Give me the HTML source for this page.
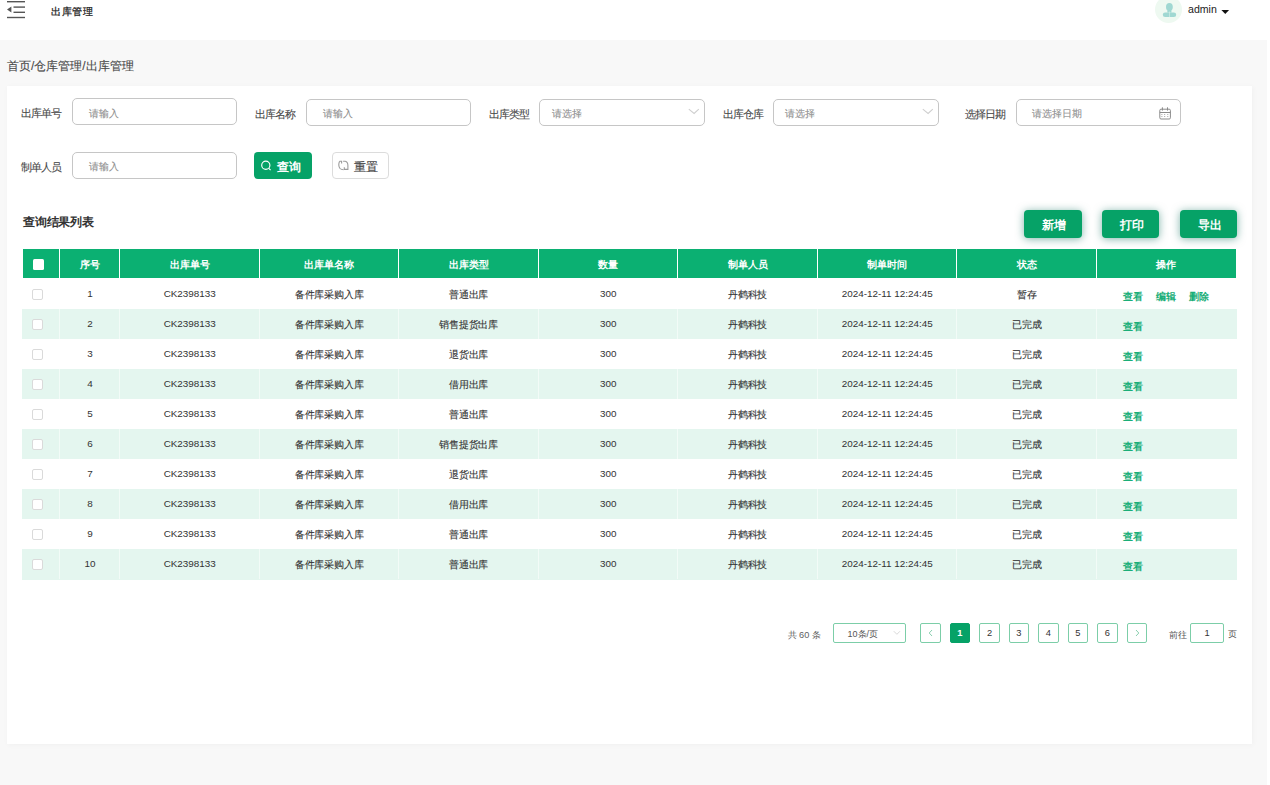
<!DOCTYPE html>
<html><head><meta charset="utf-8">
<style>
*{box-sizing:border-box;margin:0;padding:0}
html,body{width:1270px;height:785px;overflow:hidden}
body{position:relative;background:#f8f8f8;font-family:"Liberation Sans",sans-serif;color:#333}
.abs{position:absolute}
.hdr{left:0;top:0;width:1270px;height:40px;background:#fff}
.rstrip{left:1267px;top:40px;width:3px;height:745px;background:#fff}
.crumb{left:7px;top:56px;font-size:12px;line-height:20px;color:#4a4a4a;-webkit-text-stroke:0.12px #4a4a4a;white-space:nowrap}
.card{left:7px;top:86px;width:1245px;height:658px;background:#fff;box-shadow:1px 1px 6px rgba(0,0,0,0.035)}
.lbl{font-size:11px;letter-spacing:-1px;line-height:14px;color:#484848;-webkit-text-stroke:0.1px #484848;white-space:nowrap}
.inp{height:27px;border:1px solid #c6c6c6;border-radius:5px;background:#fff}
.ph{font-size:10px;line-height:13px;color:#8f8f8f;-webkit-text-stroke:0.1px #8f8f8f;white-space:nowrap}
.btn-g{background:#06a267;border-radius:4px;color:#fff}
.hd{left:23px;top:249px;width:1213px;height:29px;background:#0bb072}
.cell{position:absolute;text-align:center;white-space:nowrap}
.th{color:#fff;font-size:10px;font-weight:bold;line-height:31px}
.row{position:absolute;left:22px;width:1215px;height:30px}
.row.m{background:#e4f6ef}
.td{font-size:9.9px;line-height:31px;color:#333}
.td.zh{font-size:10px;letter-spacing:-0.2px;text-indent:-0.2px;line-height:34px;-webkit-text-stroke:0.12px #333}
.cb{position:absolute;width:11px;height:11px;border:1px solid #dadada;border-radius:2px;background:#fff}
.vline{position:absolute;width:1px;background:#fff}
.vline.m{background:#f2fbf7}
.op{position:absolute;font-size:9.8px;font-weight:bold;color:#1aae78;white-space:nowrap;line-height:14px}
.pg{position:absolute;top:623px;width:20.5px;height:20px;border:1px solid #7ccea8;border-radius:2px;background:#fff;font-size:9.3px;line-height:18.5px;text-align:center;color:#333}
</style></head><body>
<div class="abs hdr"></div>
<div class="abs rstrip"></div>
<!-- menu icon -->
<svg class="abs" style="left:0;top:0" width="40" height="40" viewBox="0 0 40 40">
<g fill="#555">
<rect x="7" y="1" width="18" height="1.4"/>
<rect x="13.5" y="6.4" width="11.5" height="1.4"/>
<rect x="13.5" y="11.6" width="11.5" height="1.4"/>
<rect x="7" y="16.8" width="18" height="1.4"/>
<path d="M7 9.5 L11.4 6.4 L11.4 12.6 Z"/>
</g></svg>
<div class="abs" style="left:51px;top:5px;font-size:10.3px;letter-spacing:0.6px;line-height:14px;color:#222;-webkit-text-stroke:0.25px #222">出库管理</div>
<!-- avatar -->
<div class="abs" style="left:1155px;top:-4px;width:27px;height:27px;border-radius:50%;background:#eef9f1"></div>
<svg class="abs" style="left:1155px;top:-4px" width="27" height="27" viewBox="0 0 27 27">
<g fill="#a0d8d2">
<ellipse cx="14.4" cy="10.9" rx="3.4" ry="3.9"/>
<path d="M12.6 14 L16.2 14 L16.6 16.6 L12.2 16.6 Z"/>
<rect x="7.8" y="16.5" width="13.4" height="4.6" rx="2.3"/>
</g>
<path d="M14.5 15.5 V21.1" stroke="#d6f0ea" stroke-width="0.6"/>
</svg>
<div class="abs" style="left:1188px;top:2px;font-size:10.6px;line-height:14px;color:#222">admin</div>
<svg class="abs" style="left:1221px;top:9px" width="9" height="6" viewBox="0 0 9 6"><path d="M0.4 1 L8.1 1 L4.25 4.9 Z" fill="#111"/></svg>

<div class="abs crumb">首页/仓库管理/出库管理</div>
<div class="abs card"></div>

<!-- form row 1 -->
<div class="abs lbl" style="left:21px;top:106px">出库单号</div>
<div class="abs inp" style="left:72px;top:98px;width:165px"></div>
<div class="abs ph" style="left:89px;top:107px">请输入</div>

<div class="abs lbl" style="left:255px;top:107px">出库名称</div>
<div class="abs inp" style="left:306px;top:99px;width:165px"></div>
<div class="abs ph" style="left:323px;top:107px">请输入</div>

<div class="abs lbl" style="left:489px;top:107px">出库类型</div>
<div class="abs inp" style="left:539px;top:99px;width:166px"></div>
<div class="abs ph" style="left:552px;top:107px">请选择</div>
<svg class="abs" style="left:684px;top:102px" width="20" height="20" viewBox="0 0 20 20"><path d="M4.8 7.1 L10.1 11.5 L14.8 7.1" fill="none" stroke="#cfcfcf" stroke-width="1.1"/></svg>

<div class="abs lbl" style="left:723px;top:107px">出库仓库</div>
<div class="abs inp" style="left:773px;top:99px;width:166px"></div>
<div class="abs ph" style="left:785px;top:107px">请选择</div>
<svg class="abs" style="left:918px;top:102px" width="20" height="20" viewBox="0 0 20 20"><path d="M4.8 7.1 L10.1 11.5 L14.8 7.1" fill="none" stroke="#cfcfcf" stroke-width="1.1"/></svg>

<div class="abs lbl" style="left:965px;top:107px">选择日期</div>
<div class="abs inp" style="left:1016px;top:99px;width:165px"></div>
<div class="abs ph" style="left:1032px;top:107px">请选择日期</div>
<svg class="abs" style="left:1154px;top:103px" width="22" height="22" viewBox="0 0 22 22"><g fill="none" stroke="#8a8a8a" stroke-width="1"><rect x="5.8" y="6.2" width="10.6" height="9.8" rx="1.2"/><path d="M5.8 9.5 H16.4 M8.4 4.3 V7.6 M13.5 4.3 V7.6"/></g><g fill="#9a9a9a"><rect x="7.3" y="11.1" width="1.1" height="0.8"/><rect x="10.1" y="11.1" width="1.1" height="0.8"/><rect x="13.2" y="11.1" width="1.1" height="0.8"/><rect x="7.3" y="13.2" width="1.1" height="0.8"/><rect x="10.1" y="13.2" width="1.1" height="0.8"/><rect x="13.2" y="13.2" width="1.1" height="0.8"/></g></svg>

<!-- form row 2 -->
<div class="abs lbl" style="left:21px;top:159.5px">制单人员</div>
<div class="abs inp" style="left:72px;top:151.5px;width:165px"></div>
<div class="abs ph" style="left:88.5px;top:159.5px">请输入</div>

<div class="abs btn-g" style="left:254px;top:151.5px;width:58px;height:27.5px"></div>
<svg class="abs" style="left:256px;top:155px" width="20" height="20" viewBox="0 0 20 20"><circle cx="9.8" cy="10.2" r="4.1" fill="none" stroke="#fff" stroke-width="1.15"/><path d="M12.8 13.3 L14.6 15.2" stroke="#fff" stroke-width="1.1"/></svg>
<div class="abs" style="left:276.5px;top:159px;font-size:12px;line-height:16px;font-weight:bold;color:#fff">查询</div>

<div class="abs" style="left:332px;top:152px;width:57px;height:27px;border:1px solid #dcdcdc;border-radius:4px;background:#fff"></div>
<svg class="abs" style="left:334px;top:156px" width="20" height="20" viewBox="0 0 20 20"><g fill="none" stroke="#9c9c9c" stroke-width="1.1"><path d="M7.6 7.6 V5.3 H5.5"/><path d="M5.6 5.3 C4.6 7.5 4.6 10.5 6 12.5 C7 13.6 8.5 13.8 9.6 13.8"/><path d="M9.1 5.2 H11.2 C13.2 5.6 13.9 7.3 13.9 9.5 V13.4 H10.3 V11.3"/></g></svg>
<div class="abs" style="left:354px;top:159px;font-size:11.6px;line-height:16px;color:#4a4a4a;-webkit-text-stroke:0.2px #4a4a4a">重置</div>

<!-- title & action buttons -->
<div class="abs" style="left:23px;top:214px;font-size:12px;letter-spacing:-0.25px;line-height:16px;font-weight:bold;color:#333">查询结果列表</div>
<div class="abs btn-g" style="left:1024px;top:210px;width:58px;height:27.5px;box-shadow:0 1px 8px rgba(0,105,85,0.5)"></div>
<div class="abs" style="left:1042px;top:216.5px;font-size:11.6px;line-height:16px;font-weight:bold;color:#fff">新增</div>
<div class="abs btn-g" style="left:1102px;top:210px;width:57px;height:27.5px;box-shadow:0 1px 8px rgba(0,105,85,0.5)"></div>
<div class="abs" style="left:1120px;top:216.5px;font-size:11.6px;line-height:16px;font-weight:bold;color:#fff">打印</div>
<div class="abs btn-g" style="left:1180px;top:210px;width:57px;height:27.5px;box-shadow:0 1px 8px rgba(0,105,85,0.5)"></div>
<div class="abs" style="left:1197.5px;top:216.5px;font-size:11.6px;line-height:16px;font-weight:bold;color:#fff">导出</div>

<div class="abs hd"></div>
<div class="vline" style="left:59px;top:249px;height:29px"></div>
<div class="vline" style="left:119px;top:249px;height:29px"></div>
<div class="vline" style="left:259px;top:249px;height:29px"></div>
<div class="vline" style="left:398px;top:249px;height:29px"></div>
<div class="vline" style="left:538px;top:249px;height:29px"></div>
<div class="vline" style="left:677px;top:249px;height:29px"></div>
<div class="vline" style="left:817px;top:249px;height:29px"></div>
<div class="vline" style="left:956px;top:249px;height:29px"></div>
<div class="vline" style="left:1096px;top:249px;height:29px"></div>
<div class="cb" style="left:33px;top:258.5px;border:none;background:#fff;border-radius:1.5px"></div>
<div class="cell th" style="left:60px;top:249px;width:60px">序号</div>
<div class="cell th" style="left:120px;top:249px;width:139.5px">出库单号</div>
<div class="cell th" style="left:259.5px;top:249px;width:139.5px">出库单名称</div>
<div class="cell th" style="left:399px;top:249px;width:139.5px">出库类型</div>
<div class="cell th" style="left:538.5px;top:249px;width:139.5px">数量</div>
<div class="cell th" style="left:678px;top:249px;width:139.5px">制单人员</div>
<div class="cell th" style="left:817.5px;top:249px;width:139.5px">制单时间</div>
<div class="cell th" style="left:957px;top:249px;width:139.5px">状态</div>
<div class="cell th" style="left:1096.5px;top:249px;width:139.5px">操作</div>
<div class="row" style="top:279px"></div>
<div class="cb" style="left:32px;top:288.5px"></div>
<div class="cell td" style="left:60px;top:278px;width:60px">1</div>
<div class="cell td" style="left:120px;top:278px;width:139.5px">CK2398133</div>
<div class="cell td zh" style="left:259.5px;top:278px;width:139.5px">备件库采购入库</div>
<div class="cell td zh" style="left:399px;top:278px;width:139.5px">普通出库</div>
<div class="cell td" style="left:538.5px;top:278px;width:139.5px">300</div>
<div class="cell td zh" style="left:678px;top:278px;width:139.5px">丹鹤科技</div>
<div class="cell td" style="left:817.5px;top:278px;width:139.5px">2024-12-11 12:24:45</div>
<div class="cell td zh" style="left:957px;top:278px;width:139.5px">暂存</div>
<div class="op" style="left:1123px;top:290px">查看</div>
<div class="op" style="left:1156px;top:290px">编辑</div>
<div class="op" style="left:1189px;top:290px">删除</div>
<div class="row m" style="top:309px"></div>
<div class="vline m" style="left:59px;top:309px;height:30px"></div>
<div class="vline m" style="left:119px;top:309px;height:30px"></div>
<div class="vline m" style="left:259px;top:309px;height:30px"></div>
<div class="vline m" style="left:398px;top:309px;height:30px"></div>
<div class="vline m" style="left:538px;top:309px;height:30px"></div>
<div class="vline m" style="left:677px;top:309px;height:30px"></div>
<div class="vline m" style="left:817px;top:309px;height:30px"></div>
<div class="vline m" style="left:956px;top:309px;height:30px"></div>
<div class="vline m" style="left:1096px;top:309px;height:30px"></div>
<div class="cb" style="left:32px;top:318.5px"></div>
<div class="cell td" style="left:60px;top:308px;width:60px">2</div>
<div class="cell td" style="left:120px;top:308px;width:139.5px">CK2398133</div>
<div class="cell td zh" style="left:259.5px;top:308px;width:139.5px">备件库采购入库</div>
<div class="cell td zh" style="left:399px;top:308px;width:139.5px">销售提货出库</div>
<div class="cell td" style="left:538.5px;top:308px;width:139.5px">300</div>
<div class="cell td zh" style="left:678px;top:308px;width:139.5px">丹鹤科技</div>
<div class="cell td" style="left:817.5px;top:308px;width:139.5px">2024-12-11 12:24:45</div>
<div class="cell td zh" style="left:957px;top:308px;width:139.5px">已完成</div>
<div class="op" style="left:1123px;top:320px">查看</div>
<div class="row" style="top:339px"></div>
<div class="cb" style="left:32px;top:348.5px"></div>
<div class="cell td" style="left:60px;top:338px;width:60px">3</div>
<div class="cell td" style="left:120px;top:338px;width:139.5px">CK2398133</div>
<div class="cell td zh" style="left:259.5px;top:338px;width:139.5px">备件库采购入库</div>
<div class="cell td zh" style="left:399px;top:338px;width:139.5px">退货出库</div>
<div class="cell td" style="left:538.5px;top:338px;width:139.5px">300</div>
<div class="cell td zh" style="left:678px;top:338px;width:139.5px">丹鹤科技</div>
<div class="cell td" style="left:817.5px;top:338px;width:139.5px">2024-12-11 12:24:45</div>
<div class="cell td zh" style="left:957px;top:338px;width:139.5px">已完成</div>
<div class="op" style="left:1123px;top:350px">查看</div>
<div class="row m" style="top:369px"></div>
<div class="vline m" style="left:59px;top:369px;height:30px"></div>
<div class="vline m" style="left:119px;top:369px;height:30px"></div>
<div class="vline m" style="left:259px;top:369px;height:30px"></div>
<div class="vline m" style="left:398px;top:369px;height:30px"></div>
<div class="vline m" style="left:538px;top:369px;height:30px"></div>
<div class="vline m" style="left:677px;top:369px;height:30px"></div>
<div class="vline m" style="left:817px;top:369px;height:30px"></div>
<div class="vline m" style="left:956px;top:369px;height:30px"></div>
<div class="vline m" style="left:1096px;top:369px;height:30px"></div>
<div class="cb" style="left:32px;top:378.5px"></div>
<div class="cell td" style="left:60px;top:368px;width:60px">4</div>
<div class="cell td" style="left:120px;top:368px;width:139.5px">CK2398133</div>
<div class="cell td zh" style="left:259.5px;top:368px;width:139.5px">备件库采购入库</div>
<div class="cell td zh" style="left:399px;top:368px;width:139.5px">借用出库</div>
<div class="cell td" style="left:538.5px;top:368px;width:139.5px">300</div>
<div class="cell td zh" style="left:678px;top:368px;width:139.5px">丹鹤科技</div>
<div class="cell td" style="left:817.5px;top:368px;width:139.5px">2024-12-11 12:24:45</div>
<div class="cell td zh" style="left:957px;top:368px;width:139.5px">已完成</div>
<div class="op" style="left:1123px;top:380px">查看</div>
<div class="row" style="top:399px"></div>
<div class="cb" style="left:32px;top:408.5px"></div>
<div class="cell td" style="left:60px;top:398px;width:60px">5</div>
<div class="cell td" style="left:120px;top:398px;width:139.5px">CK2398133</div>
<div class="cell td zh" style="left:259.5px;top:398px;width:139.5px">备件库采购入库</div>
<div class="cell td zh" style="left:399px;top:398px;width:139.5px">普通出库</div>
<div class="cell td" style="left:538.5px;top:398px;width:139.5px">300</div>
<div class="cell td zh" style="left:678px;top:398px;width:139.5px">丹鹤科技</div>
<div class="cell td" style="left:817.5px;top:398px;width:139.5px">2024-12-11 12:24:45</div>
<div class="cell td zh" style="left:957px;top:398px;width:139.5px">已完成</div>
<div class="op" style="left:1123px;top:410px">查看</div>
<div class="row m" style="top:429px"></div>
<div class="vline m" style="left:59px;top:429px;height:30px"></div>
<div class="vline m" style="left:119px;top:429px;height:30px"></div>
<div class="vline m" style="left:259px;top:429px;height:30px"></div>
<div class="vline m" style="left:398px;top:429px;height:30px"></div>
<div class="vline m" style="left:538px;top:429px;height:30px"></div>
<div class="vline m" style="left:677px;top:429px;height:30px"></div>
<div class="vline m" style="left:817px;top:429px;height:30px"></div>
<div class="vline m" style="left:956px;top:429px;height:30px"></div>
<div class="vline m" style="left:1096px;top:429px;height:30px"></div>
<div class="cb" style="left:32px;top:438.5px"></div>
<div class="cell td" style="left:60px;top:428px;width:60px">6</div>
<div class="cell td" style="left:120px;top:428px;width:139.5px">CK2398133</div>
<div class="cell td zh" style="left:259.5px;top:428px;width:139.5px">备件库采购入库</div>
<div class="cell td zh" style="left:399px;top:428px;width:139.5px">销售提货出库</div>
<div class="cell td" style="left:538.5px;top:428px;width:139.5px">300</div>
<div class="cell td zh" style="left:678px;top:428px;width:139.5px">丹鹤科技</div>
<div class="cell td" style="left:817.5px;top:428px;width:139.5px">2024-12-11 12:24:45</div>
<div class="cell td zh" style="left:957px;top:428px;width:139.5px">已完成</div>
<div class="op" style="left:1123px;top:440px">查看</div>
<div class="row" style="top:459px"></div>
<div class="cb" style="left:32px;top:468.5px"></div>
<div class="cell td" style="left:60px;top:458px;width:60px">7</div>
<div class="cell td" style="left:120px;top:458px;width:139.5px">CK2398133</div>
<div class="cell td zh" style="left:259.5px;top:458px;width:139.5px">备件库采购入库</div>
<div class="cell td zh" style="left:399px;top:458px;width:139.5px">退货出库</div>
<div class="cell td" style="left:538.5px;top:458px;width:139.5px">300</div>
<div class="cell td zh" style="left:678px;top:458px;width:139.5px">丹鹤科技</div>
<div class="cell td" style="left:817.5px;top:458px;width:139.5px">2024-12-11 12:24:45</div>
<div class="cell td zh" style="left:957px;top:458px;width:139.5px">已完成</div>
<div class="op" style="left:1123px;top:470px">查看</div>
<div class="row m" style="top:489px"></div>
<div class="vline m" style="left:59px;top:489px;height:30px"></div>
<div class="vline m" style="left:119px;top:489px;height:30px"></div>
<div class="vline m" style="left:259px;top:489px;height:30px"></div>
<div class="vline m" style="left:398px;top:489px;height:30px"></div>
<div class="vline m" style="left:538px;top:489px;height:30px"></div>
<div class="vline m" style="left:677px;top:489px;height:30px"></div>
<div class="vline m" style="left:817px;top:489px;height:30px"></div>
<div class="vline m" style="left:956px;top:489px;height:30px"></div>
<div class="vline m" style="left:1096px;top:489px;height:30px"></div>
<div class="cb" style="left:32px;top:498.5px"></div>
<div class="cell td" style="left:60px;top:488px;width:60px">8</div>
<div class="cell td" style="left:120px;top:488px;width:139.5px">CK2398133</div>
<div class="cell td zh" style="left:259.5px;top:488px;width:139.5px">备件库采购入库</div>
<div class="cell td zh" style="left:399px;top:488px;width:139.5px">借用出库</div>
<div class="cell td" style="left:538.5px;top:488px;width:139.5px">300</div>
<div class="cell td zh" style="left:678px;top:488px;width:139.5px">丹鹤科技</div>
<div class="cell td" style="left:817.5px;top:488px;width:139.5px">2024-12-11 12:24:45</div>
<div class="cell td zh" style="left:957px;top:488px;width:139.5px">已完成</div>
<div class="op" style="left:1123px;top:500px">查看</div>
<div class="row" style="top:519px"></div>
<div class="cb" style="left:32px;top:528.5px"></div>
<div class="cell td" style="left:60px;top:518px;width:60px">9</div>
<div class="cell td" style="left:120px;top:518px;width:139.5px">CK2398133</div>
<div class="cell td zh" style="left:259.5px;top:518px;width:139.5px">备件库采购入库</div>
<div class="cell td zh" style="left:399px;top:518px;width:139.5px">普通出库</div>
<div class="cell td" style="left:538.5px;top:518px;width:139.5px">300</div>
<div class="cell td zh" style="left:678px;top:518px;width:139.5px">丹鹤科技</div>
<div class="cell td" style="left:817.5px;top:518px;width:139.5px">2024-12-11 12:24:45</div>
<div class="cell td zh" style="left:957px;top:518px;width:139.5px">已完成</div>
<div class="op" style="left:1123px;top:530px">查看</div>
<div class="row m" style="top:548.5px;height:31px"></div>
<div class="vline m" style="left:59px;top:549px;height:30px"></div>
<div class="vline m" style="left:119px;top:549px;height:30px"></div>
<div class="vline m" style="left:259px;top:549px;height:30px"></div>
<div class="vline m" style="left:398px;top:549px;height:30px"></div>
<div class="vline m" style="left:538px;top:549px;height:30px"></div>
<div class="vline m" style="left:677px;top:549px;height:30px"></div>
<div class="vline m" style="left:817px;top:549px;height:30px"></div>
<div class="vline m" style="left:956px;top:549px;height:30px"></div>
<div class="vline m" style="left:1096px;top:549px;height:30px"></div>
<div class="cb" style="left:32px;top:558.5px"></div>
<div class="cell td" style="left:60px;top:548px;width:60px">10</div>
<div class="cell td" style="left:120px;top:548px;width:139.5px">CK2398133</div>
<div class="cell td zh" style="left:259.5px;top:548px;width:139.5px">备件库采购入库</div>
<div class="cell td zh" style="left:399px;top:548px;width:139.5px">普通出库</div>
<div class="cell td" style="left:538.5px;top:548px;width:139.5px">300</div>
<div class="cell td zh" style="left:678px;top:548px;width:139.5px">丹鹤科技</div>
<div class="cell td" style="left:817.5px;top:548px;width:139.5px">2024-12-11 12:24:45</div>
<div class="cell td zh" style="left:957px;top:548px;width:139.5px">已完成</div>
<div class="op" style="left:1123px;top:560px">查看</div>
<div class="abs" style="left:787.5px;top:627.5px;font-size:9.2px;line-height:14px;color:#606060">共 60 条</div>
<div class="pg" style="left:832.5px;width:73px"></div>
<div class="abs" style="left:847.5px;top:626.5px;font-size:9px;line-height:14px;color:#555">10条/页</div>
<svg class="abs" style="left:893px;top:630px" width="8" height="6" viewBox="0 0 8 6"><path d="M0.8 1.2 L3.9 4.3 L7 1.2" fill="none" stroke="#d4d4d4" stroke-width="0.9"/></svg>
<div class="pg" style="left:920.3px"></div><svg class="abs" style="left:928.3px;top:629px" width="5" height="8" viewBox="0 0 5 8"><path d="M4 1 L1.2 4 L4 7" fill="none" stroke="#7cc9a6" stroke-width="0.9"/></svg>
<div class="pg" style="left:949.7px;background:#06a267;border-color:#06a267;color:#fff;font-weight:bold">1</div>
<div class="pg" style="left:979.3px">2</div>
<div class="pg" style="left:1008.7px">3</div>
<div class="pg" style="left:1038.1px">4</div>
<div class="pg" style="left:1067.5px">5</div>
<div class="pg" style="left:1097px">6</div>
<div class="pg" style="left:1126.5px"></div><svg class="abs" style="left:1134.5px;top:629px" width="5" height="8" viewBox="0 0 5 8"><path d="M1 1 L3.8 4 L1 7" fill="none" stroke="#7cc9a6" stroke-width="0.9"/></svg>
<div class="abs" style="left:1169px;top:627.5px;font-size:9.2px;line-height:14px;color:#555">前往</div>
<div class="pg" style="left:1190px;width:34px">1</div>
<div class="abs" style="left:1228px;top:627px;font-size:9.2px;line-height:14px;color:#555">页</div>
</body></html>
